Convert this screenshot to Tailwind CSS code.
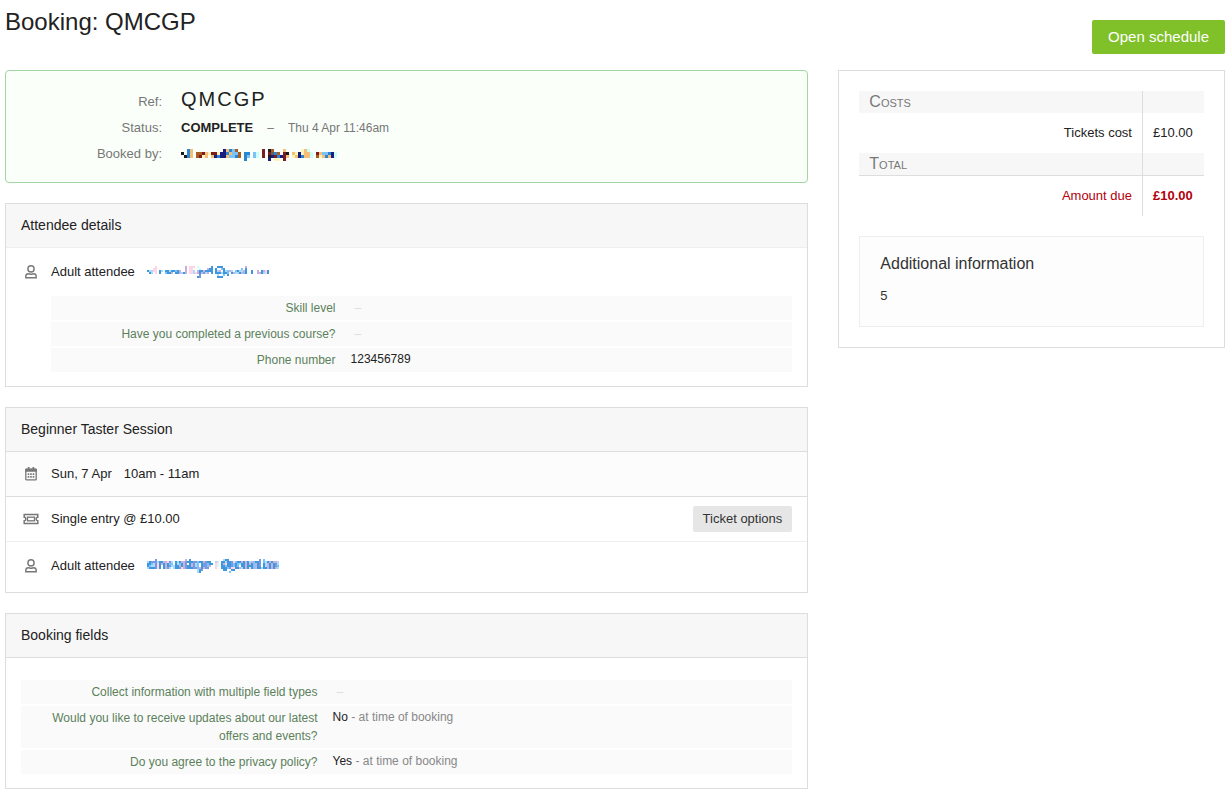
<!DOCTYPE html>
<html lang="en">
<head>
  <meta charset="UTF-8" />
  <meta name="viewport" content="width=device-width, initial-scale=1.0"/>
  <title>Booking: QMCGP</title>
  <script src="https://cdn.jsdelivr.net/npm/@tailwindcss/browser@4"></script>
</head>
<body class="bg-white px-[5px] font-['Liberation_Sans',Arial,sans-serif] text-[13px] leading-5 text-[#222]">

  <!-- Icons -->
  <svg class="hidden">
    <symbol id="icon-user" viewBox="0 0 12 14">
      <g fill="none" stroke="currentColor" stroke-width="1.4">
        <circle cx="6" cy="3.900" r="3.100"/>
        <path d="M.8 12.800v-1.300c0-1.600 1-2.700 2.600-2.700.9 0 1.300.5 2.600.5s1.700-.5 2.600-.5c1.600 0 2.600 1.100 2.600 2.700v1.300z"/>
      </g>
    </symbol>
    <symbol id="icon-calendar" viewBox="0 0 12 14">
      <path d="M2.800 0h1.700v2.500H2.800zM7.500 0h1.700v2.500H7.500zM1.200 1.500h9.600c.6 0 1 .4 1 1v2.300H.2V2.500c0-.6.4-1 1-1z" fill="currentColor"/>
      <rect x=".8" y="2.500" width="10.400" height="10.300" rx=".6" fill="none" stroke="currentColor" stroke-width="1.300"/>
      <path d="M2.700 6.300h1.600v1.600H2.700zM5.200 6.300h1.600v1.600H5.200zM7.700 6.300h1.600v1.600H7.700zM2.700 9.100h1.600v1.600H2.700zM5.200 9.100h1.600v1.600H5.200zM7.700 9.100h1.600v1.600H7.700z" fill="currentColor"/>
    </symbol>
    <symbol id="icon-ticket" viewBox="0 0 16 12">
      <g fill="none" stroke="currentColor" stroke-width="1.500">
        <path d="M1.200 1.500h13.600v2.800a1.700 1.700 0 0 0 0 3.400v2.800H1.200V7.700a1.700 1.700 0 0 0 0-3.400z"/>
        <rect x="4.500" y="4.200" width="7" height="3.600" stroke-width="1.300"/>
      </g>
    </symbol>
  </svg>

  <!-- Header -->
  <header class="flex items-start justify-between pb-4">
    <h1 class="text-2xl leading-[44px]">Booking: QMCGP</h1>
    <button type="button" class="mt-5 h-[34px] rounded-xs bg-[#80c029] px-4 text-[15px] text-white">Open schedule</button>
  </header>

  <div class="grid grid-cols-3 items-start gap-[30px]">
    <main class="col-span-2 flex flex-col gap-5">

      <!-- Summary -->
      <section class="rounded border border-[#a3d6a3] bg-[#fafffa] py-[15px]">
        <dl class="grid grid-cols-[156px_1fr] items-baseline gap-x-[19px] leading-[26px]">
          <dt class="text-right text-[#777]">Ref:</dt>
          <dd class="mb-0.5 text-xl leading-[26px] tracking-[2px]">QMCGP</dd>
          <dt class="text-right text-[#777]">Status:</dt>
          <dd><strong>COMPLETE</strong><span class="px-3.5 text-xs text-[#777]">–</span><span class="text-xs text-[#777]">Thu 4 Apr 11:46am</span></dd>
          <dt class="text-right text-[#777]">Booked by:</dt>
          <dd class="flex h-[26px] items-center self-start"><svg id="booker" class="mt-0.5" role="img" aria-label="Email hidden"></svg></dd>
        </dl>
      </section>

      <!-- Attendee details -->
      <section class="border border-[#ddd]">
        <h2 class="border-b border-[#eee] bg-[#f7f7f7] px-[15px] text-sm leading-[43px]">Attendee details</h2>
        <div class="flex h-12 items-center px-[15px]">
          <span class="mr-2.5 flex w-5 justify-center text-[#777]"><svg class="h-3.5 w-3"><use href="#icon-user"/></svg></span>
          <span>Adult attendee</span>
          <a href="#" class="ml-3"><svg id="attendee" role="img" aria-label="Email hidden"></svg></a>
        </div>
        <dl class="mr-[15px] mb-3.5 ml-[45px] flex flex-col gap-0.5 text-xs">
          <div class="flex bg-[#fafafa] py-[3px]">
            <dt class="w-2/5 pr-3 pl-3 text-right leading-[18px] text-[#5b815b]">Skill level</dt>
            <dd class="pl-[7px] leading-[18px] text-[#ddd]">–</dd>
          </div>
          <div class="flex bg-[#fafafa] py-[3px]">
            <dt class="w-2/5 pr-3 pl-3 text-right leading-[18px] text-[#5b815b]">Have you completed a previous course?</dt>
            <dd class="pl-[7px] leading-[18px] text-[#ddd]">–</dd>
          </div>
          <div class="flex bg-[#fafafa] py-[3px]">
            <dt class="w-2/5 pr-3 pl-3 text-right leading-[18px] text-[#5b815b]">Phone number</dt>
            <dd class="pl-[3px] leading-4">123456789</dd>
          </div>
        </dl>
      </section>

      <!-- Session -->
      <section class="border border-[#ddd]">
        <h2 class="border-b border-[#ddd] bg-[#f7f7f7] px-[15px] text-sm leading-[43px]">Beginner Taster Session</h2>
        <div class="flex h-[45px] items-center border-b border-[#ddd] bg-[#fcfcfc] px-[15px]">
          <span class="mr-2.5 flex w-5 justify-center text-[#777]"><svg class="h-3.5 w-3"><use href="#icon-calendar"/></svg></span>
          <span>Sun, 7 Apr</span>
          <span class="ml-3">10am - 11am</span>
        </div>
        <div class="flex h-[45px] items-center border-b border-[#eee] px-[15px]">
          <span class="mr-2.5 flex w-5 justify-center text-[#777]"><svg class="h-3 w-4"><use href="#icon-ticket"/></svg></span>
          <span>Single entry @ £10.00</span>
          <button type="button" class="ml-auto h-[26px] rounded-xs bg-[#e6e6e6] px-2.5 text-[#333]">Ticket options</button>
        </div>
        <div class="flex h-[50px] items-center px-[15px] pb-0.5">
          <span class="mr-2.5 flex w-5 justify-center text-[#777]"><svg class="h-3.5 w-3"><use href="#icon-user"/></svg></span>
          <span>Adult attendee</span>
          <a href="#" class="ml-3"><svg id="ticketHolder" role="img" aria-label="Email hidden"></svg></a>
        </div>
      </section>

      <!-- Booking fields -->
      <section class="border border-[#ddd]">
        <h2 class="border-b border-[#ddd] bg-[#f7f7f7] px-[15px] text-sm leading-[43px]">Booking fields</h2>
        <dl class="mx-[15px] mt-[22px] mb-3.5 flex flex-col gap-0.5 text-xs">
          <div class="flex bg-[#fafafa] py-[3px]">
            <dt class="w-2/5 pr-3 pl-3 text-right leading-[18px] text-[#5b815b]">Collect information with multiple field types</dt>
            <dd class="pl-[7px] leading-[18px] text-[#ddd]">–</dd>
          </div>
          <div class="flex bg-[#fafafa] py-[3px]">
            <dt class="w-2/5 pr-3 pl-3 text-right leading-[18px] text-[#5b815b]">Would you like to receive updates about our latest offers and events?</dt>
            <dd class="pl-[3px] leading-4">No <span class="text-[#888]">- at time of booking</span></dd>
          </div>
          <div class="flex bg-[#fafafa] py-[3px]">
            <dt class="w-2/5 pr-3 pl-3 text-right leading-[18px] text-[#5b815b]">Do you agree to the privacy policy?</dt>
            <dd class="pl-[3px] leading-4">Yes <span class="text-[#888]">- at time of booking</span></dd>
          </div>
        </dl>
      </section>
    </main>

    <!-- Costs -->
    <aside class="border border-[#ddd] p-5">
      <table class="w-full border-separate border-spacing-0">
        <tbody>
          <tr class="bg-[#f7f7f7]">
            <th scope="rowgroup" class="h-[22px] px-2.5 text-left text-base leading-5 font-normal text-[#777] [font-variant:small-caps]">Costs</th>
            <td class="w-[62px] border-l border-[#ddd]"></td>
          </tr>
          <tr>
            <th scope="row" class="h-10 px-2.5 text-right font-normal">Tickets cost</th>
            <td class="border-l border-[#ddd] px-2.5">£10.00</td>
          </tr>
        </tbody>
        <tbody>
          <tr class="bg-[#f7f7f7]">
            <th scope="rowgroup" class="h-[23px] border-b border-[#ddd] px-2.5 text-left text-base leading-5 font-normal text-[#777] [font-variant:small-caps]">Total</th>
            <td class="border-b border-l border-[#ddd]"></td>
          </tr>
          <tr class="text-[#b3000c]">
            <th scope="row" class="h-10 px-2.5 text-right font-normal">Amount due</th>
            <td class="border-l border-[#ddd] px-2.5 font-bold">£10.00</td>
          </tr>
        </tbody>
      </table>
      <div class="mt-5 border border-[#eee] bg-[#fdfdfd] px-5 pt-[15px] pb-5 text-[#333]">
        <h3 class="text-base leading-6">Additional information</h3>
        <p class="mt-2.5">5</p>
      </div>
    </aside>
  </div>

  <script>
    // Emails are masked with a mosaic, one letter per cell
    const colours = {
      k: '#1c1c1c', n: '#1c1c80', b: '#2a86d0', s: '#7cc4f8', c: '#c8ffff', y: '#fff5b8',
      o: '#f4c078', r: '#7a1c20', w: '#a85c20', g: '#606060', p: '#ffd4e4', v: '#c8b0dc',
      u: '#3f97dd', t: '#a8dcff', l: '#7898e0'
    };

    function drawMosaic(id, size, rows) {
      const svg = document.getElementById(id);
      svg.setAttribute('width', rows[0].length * size);
      svg.setAttribute('height', rows.length * size);
      svg.setAttribute('shape-rendering', 'crispEdges');
      rows.forEach((row, y) => [...row].forEach((cell, x) => {
        if (!colours[cell]) return;
        const rect = document.createElementNS('http://www.w3.org/2000/svg', 'rect');
        rect.setAttribute('x', x * size);
        rect.setAttribute('y', y * size);
        rect.setAttribute('width', size);
        rect.setAttribute('height', size);
        rect.setAttribute('fill', colours[cell]);
        svg.appendChild(rect);
      }));
    }

    drawMosaic('booker', 3, [
      '..bo..........nobsw........r.kw...o.....yoc.........',
      'k.bo.wwroyrrynnbossw.bb.sc.r.rgbw.rk.oynyooc.rossbnc',
      '.kbo.wryo.onbnnossbw.bs.sc.r.knrbnro.yonbooc.wyobonc',
      '.....................b.......n.yy.r.................'
    ]);
    drawMosaic('attendee', 2, [
      '....p..............v.ppp.c......u..uuu...........v...........',
      '...pp..............v.pp...c...vuu.u..su........s.u...........',
      'uttpp.ut.uutuusuv..v.ppt.vuuvuuuu.utv.utsvt.suttvu..u..v.uvpu',
      '.ut.p.u..suuv.uuvtuv.pptpvuvltv.u.uuutuus.uvttuvsu..u..vvutpu',
      '..........................l........t..s.u....................',
      '.........................ul........uuu.......................'
    ]);
    drawMosaic('ticketHolder', 2, [
      '....l..............v.u................tuu...............l.s.......',
      'tullltuuvvplt.utuvvluuullsuuvluu..tp.uutuulpsuuvuvutvsuul.stuvuvvt',
      'uustlpuvuvuss.utsuvl.uvlts.ullsuu.pc.uvpuulsustuuvuvusvul.utvuvult',
      'usttlpu.uvulttuuvuvluuvlts.ullsv..pc.uusuulsus.uuvuuusvul.utvuvuls',
      'tuuulpu.uvlt.tuulpvluuullsvuvll...p..uuuslppuuvtuvupusvuutuuvuvuvt',
      '.........................tul..........uu..uu......................',
      '.........................tu..............s........................'
    ]);
  </script>
</body>
</html>
